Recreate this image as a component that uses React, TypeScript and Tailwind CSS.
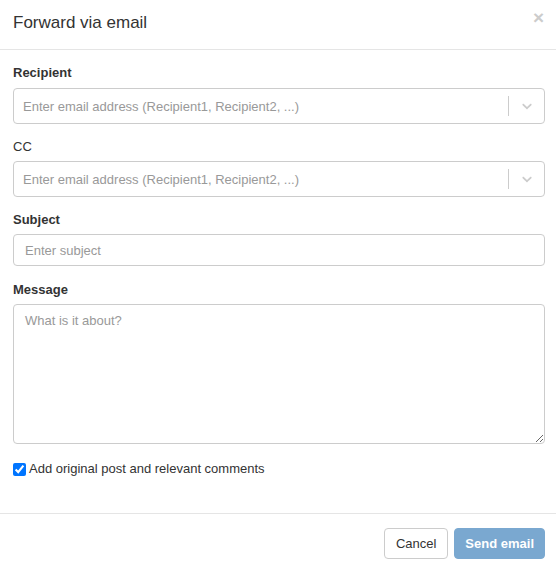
import React from "react";

function EmailSelect() {
  return (
    <div className="flex h-[36px] items-center rounded-[4px] border border-[#cccccc] bg-white">
      <input
        className="h-full min-w-0 flex-1 bg-transparent pl-[9px] text-[13px] text-[#333] outline-none placeholder:text-[#999]"
        placeholder="Enter email address (Recipient1, Recipient2, ...)"
      />
      <div className="h-[20px] w-px bg-[#cccccc]" />
      <div className="flex w-[35px] items-center justify-center">
        <svg width="16" height="16" viewBox="0 0 20 20" fill="#cccccc">
          <path d="M4.516 7.548c0.436-0.446 1.043-0.481 1.576 0l3.908 3.747 3.908-3.747c0.533-0.481 1.141-0.446 1.574 0 0.436 0.445 0.408 1.197 0 1.615-0.406 0.418-4.695 4.502-4.695 4.502-0.217 0.223-0.502 0.335-0.787 0.335s-0.57-0.112-0.789-0.335c0 0-4.287-4.084-4.695-4.502s-0.436-1.17 0-1.615z" />
        </svg>
      </div>
    </div>
  );
}

export default function App() {
  return (
    <div
      className="h-[572px] w-[556px] bg-white text-[13px] text-[#333]"
      style={{ fontFamily: '"Liberation Sans", Arial, sans-serif' }}
    >
      <div className="flex h-[50px] items-start justify-between border-b border-[#e5e5e5] pl-[13px] pr-[12px]">
        <h4 className="mt-[12px] text-[17px] leading-[22px] text-[#333]">Forward via email</h4>
        <button className="mt-[7px] text-[19px] font-bold leading-[21px] text-[#cccccc]">×</button>
      </div>

      <div className="pl-[13px] pr-[11px] pt-[13px]">
        <label className="block h-[20px] font-bold leading-[20px]">Recipient</label>
        <div className="mt-[5px]">
          <EmailSelect />
        </div>

        <div className="mt-[13px] h-[20px] leading-[20px]">CC</div>
        <div className="mt-[4px]">
          <EmailSelect />
        </div>

        <label className="mt-[13px] block h-[20px] font-bold leading-[20px]">Subject</label>
        <input
          className="mt-[4px] block h-[32px] w-full rounded-[4px] border border-[#cccccc] px-[11px] text-[13px] outline-none placeholder:text-[#999]"
          placeholder="Enter subject"
        />

        <label className="mt-[14px] block h-[20px] font-bold leading-[20px]">Message</label>
        <textarea
          className="mt-[4px] block h-[140px] w-full resize-y rounded-[4px] border border-[#cccccc] px-[11px] py-[6px] text-[13px] leading-[20px] outline-none placeholder:text-[#999]"
          placeholder="What is it about?"
        />

        <label className="mt-[15px] flex h-[20px] items-center leading-[20px]">
          <input type="checkbox" defaultChecked className="m-0 mr-[3px] h-[13px] w-[13px] accent-[#0075ff]" />
          <span>Add original post and relevant comments</span>
        </label>
      </div>

      <div className="mt-[34px] flex justify-end gap-[6px] border-t border-[#e5e5e5] pl-[13px] pr-[11px] pt-[14px]">
        <button className="h-[31px] rounded-[4px] border border-[#cccccc] bg-white px-[11px] text-[13px] text-[#333]">
          Cancel
        </button>
        <button className="h-[31px] rounded-[4px] border border-[#7aa8d0] bg-[#7aa8d0] px-[10px] text-[13px] font-bold text-white">
          Send email
        </button>
      </div>
    </div>
  );
}
